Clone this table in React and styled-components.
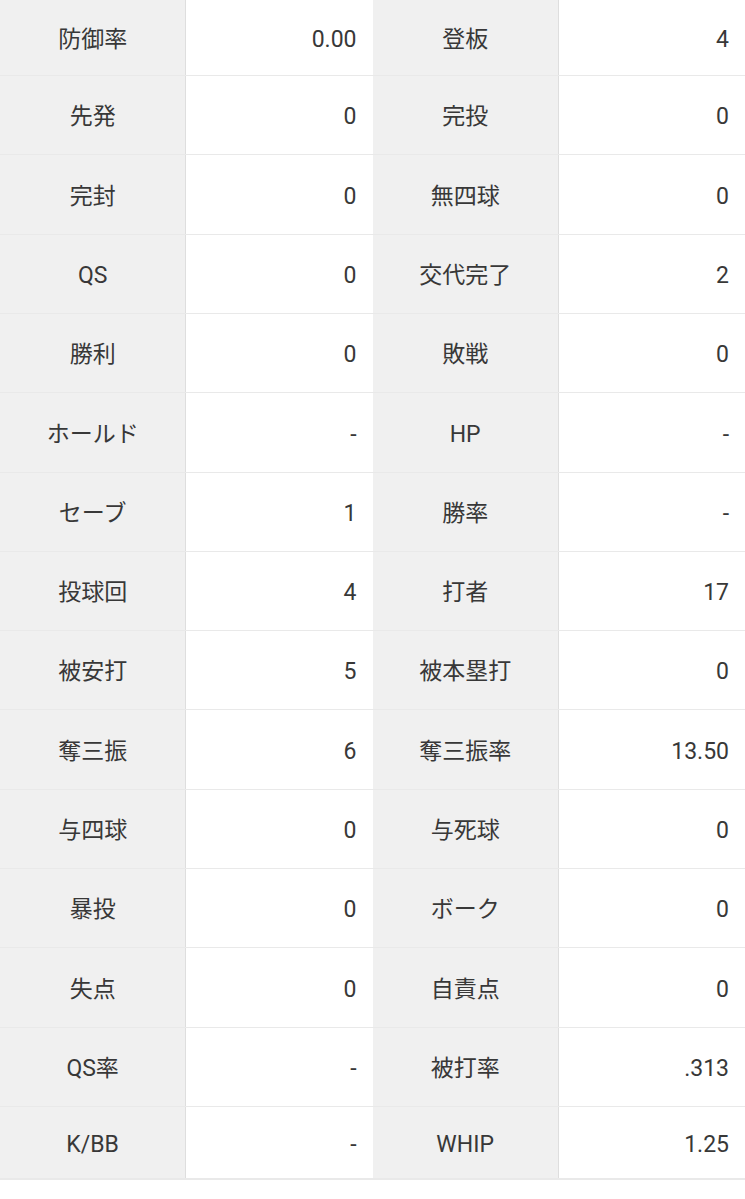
import React from "react";
import styled, { createGlobalStyle } from "styled-components";

const Global = createGlobalStyle`
  html, body { margin: 0; padding: 0; background: #ffffff; }
  body { font-family: Roboto, "Noto Sans CJK JP", sans-serif; }
`;

const Table = styled.div`
  display: flex;
  flex-direction: column;
  width: 745px;
`;

const Row = styled.div`
  display: grid;
  grid-template-columns: repeat(4, 1fr);
  height: ${(p) => p.$h}px;
  box-sizing: border-box;
  border-bottom: ${(p) => (p.$last ? 2 : 1)}px solid #e9e9e9;
`;

const Label = styled.div`
  display: flex;
  align-items: center;
  justify-content: center;
  padding-top: 3px;
  background: #f0f0f0;
  border-right: 1px solid #dedede;
  color: #383838;
  font-size: 23px;
  line-height: 1;
`;

const Value = styled.div`
  display: flex;
  align-items: center;
  justify-content: flex-end;
  padding: 3px 16px 0 0;
  background: #ffffff;
  color: #383838;
  font-size: 23px;
  line-height: 1;
`;

const data = [
  ["防御率", "0.00", "登板", "4"],
  ["先発", "0", "完投", "0"],
  ["完封", "0", "無四球", "0"],
  ["QS", "0", "交代完了", "2"],
  ["勝利", "0", "敗戦", "0"],
  ["ホールド", "-", "HP", "-"],
  ["セーブ", "1", "勝率", "-"],
  ["投球回", "4", "打者", "17"],
  ["被安打", "5", "被本塁打", "0"],
  ["奪三振", "6", "奪三振率", "13.50"],
  ["与四球", "0", "与死球", "0"],
  ["暴投", "0", "ボーク", "0"],
  ["失点", "0", "自責点", "0"],
  ["QS率", "-", "被打率", ".313"],
  ["K/BB", "-", "WHIP", "1.25"],
];

function heightFor(i) {
  if (i === 0) return 76;
  if (i === data.length - 1) return 73;
  const start = 76 + (i - 1) * 79.3;
  const end = 76 + i * 79.3;
  return Math.round(end) - Math.round(start);
}

export default function App() {
  return (
    <>
      <Global />
      <Table>
        {data.map((r, i) => (
          <Row key={i} $h={heightFor(i)} $last={i === data.length - 1}>
            <Label>{r[0]}</Label>
            <Value>{r[1]}</Value>
            <Label>{r[2]}</Label>
            <Value>{r[3]}</Value>
          </Row>
        ))}
      </Table>
    </>
  );
}
